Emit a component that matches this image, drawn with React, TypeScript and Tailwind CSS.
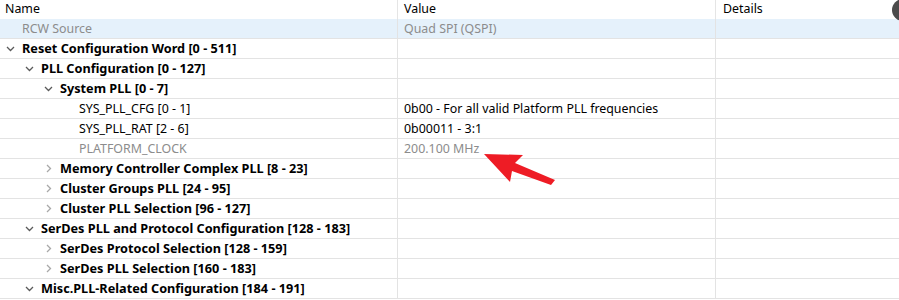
import React from 'react'

interface Row {
    name: string
    value?: string
    level: number
    kind: 'open' | 'closed' | 'leaf'
    bold?: boolean
    muted?: boolean
    selected?: boolean
}

const ROWS: Row[] = [
    { name: 'RCW Source', value: 'Quad SPI (QSPI)', level: 0, kind: 'leaf', muted: true, selected: true },
    { name: 'Reset Configuration Word [0 - 511]', level: 0, kind: 'open', bold: true },
    { name: 'PLL Configuration [0 - 127]', level: 1, kind: 'open', bold: true },
    { name: 'System PLL [0 - 7]', level: 2, kind: 'open', bold: true },
    { name: 'SYS_PLL_CFG [0 - 1]', value: '0b00 - For all valid Platform PLL frequencies', level: 3, kind: 'leaf' },
    { name: 'SYS_PLL_RAT [2 - 6]', value: '0b00011 - 3:1', level: 3, kind: 'leaf' },
    { name: 'PLATFORM_CLOCK', value: '200.100 MHz', level: 3, kind: 'leaf', muted: true },
    { name: 'Memory Controller Complex PLL [8 - 23]', level: 2, kind: 'closed', bold: true },
    { name: 'Cluster Groups PLL [24 - 95]', level: 2, kind: 'closed', bold: true },
    { name: 'Cluster PLL Selection [96 - 127]', level: 2, kind: 'closed', bold: true },
    { name: 'SerDes PLL and Protocol Configuration [128 - 183]', level: 1, kind: 'open', bold: true },
    { name: 'SerDes Protocol Selection [128 - 159]', level: 2, kind: 'closed', bold: true },
    { name: 'SerDes PLL Selection [160 - 183]', level: 2, kind: 'closed', bold: true },
    { name: 'Misc.PLL-Related Configuration [184 - 191]', level: 1, kind: 'open', bold: true },
]

const INDENT = ['pl-[22px]', 'pl-[41px]', 'pl-[60px]', 'pl-[79px]']

function Chevron({ kind }: { kind: Row['kind'] }) {
    if (kind === 'open') {
        return (
            <svg width="9" height="6" viewBox="0 0 9 6" className="absolute left-[-16px] top-[7px]">
                <path d="M1 1 L4.5 4.5 L8 1" fill="none" stroke="#5a5a5a" strokeWidth="1.3" />
            </svg>
        )
    }
    if (kind === 'closed') {
        return (
            <svg width="6" height="9" viewBox="0 0 6 9" className="absolute left-[-14px] top-[5px]">
                <path d="M1 1 L4.5 4.5 L1 8" fill="none" stroke="#a8a8a8" strokeWidth="1.3" />
            </svg>
        )
    }
    return null
}

export default function App() {
    return (
        <div
            className="relative h-[300px] w-[899px] overflow-hidden bg-white text-[12.4px] text-black"
            style={{ fontFamily: '"Noto Sans", "Liberation Sans", sans-serif' }}
        >
            <div className="grid h-[19px] grid-cols-[398px_318px_1fr] leading-[18px]">
                <div className="border-r border-[#e5e5e5] pl-[5px]">Name</div>
                <div className="border-r border-[#e5e5e5] pl-[6px]">Value</div>
                <div className="pl-[7px]">Details</div>
            </div>

            {ROWS.map(row => (
                <div
                    key={row.name}
                    className={`grid h-[20px] grid-cols-[398px_318px_1fr] border-b border-[#e3e3e3] leading-[19px] ${row.selected ? 'bg-[#e5f1fb]' : ''}`}
                >
                    <div className={`border-r border-[#e3e3e3] ${INDENT[row.level]}`}>
                        <span className={`relative whitespace-nowrap ${row.bold ? 'text-[12.7px] font-bold' : ''} ${row.muted ? 'text-[#8c8c8c]' : ''}`}>
                            <Chevron kind={row.kind} />
                            {row.name}
                        </span>
                    </div>
                    <div className={`whitespace-nowrap border-r border-[#e3e3e3] pl-[6px] ${row.muted ? 'text-[#8c8c8c]' : ''}`}>
                        {row.value}
                    </div>
                    <div />
                </div>
            ))}

            <div className="absolute left-[892px] top-[-1px] h-[22px] w-[22px] rounded-full bg-[#4b4b4b]" />

            <svg width="899" height="300" className="pointer-events-none absolute left-0 top-0">
                <polygon
                    points="484,154 523,155 515,163 555,180 551,185 512,171 510,182"
                    fill="#ee1c25"
                />
            </svg>
        </div>
    )
}
